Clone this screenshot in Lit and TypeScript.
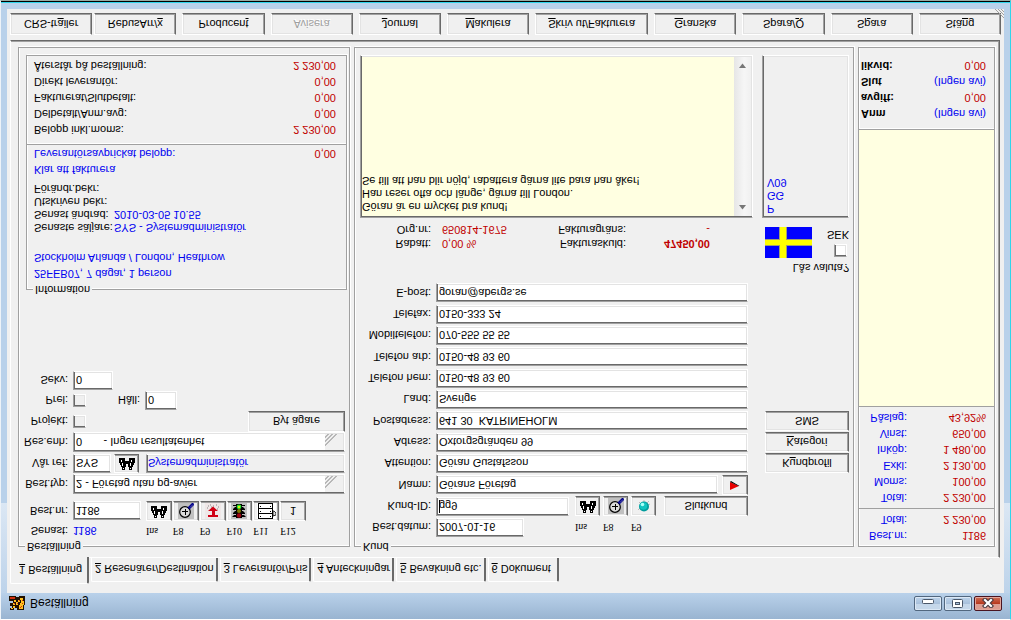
import { LitElement, html, svg, css, TemplateResult } from "lit";
import { customElement, state } from "lit/decorators.js";

type Label = [string, string, string];

const text = ([before, key, after]: Label) => html`${before}<u>${key}</u>${after}`;

const binoculars = svg`<g shape-rendering="crispEdges">
  <path d="M3 1h3v3h-3zM10 1h3v3h-3zM2 4h5v3h-5zM9 4h5v3h-5zM1 6h5v3h-5zM10 6h5v3h-5zM5 6h6v4h-6zM0 8h5v5h-5zM11 8h5v5h-5zM4 10h2v3h-2zM10 10h2v3h-2z"/>
  <path fill="#fff" d="M4 2h1v1h-1zM11 2h1v1h-1zM3 5h1v3h-1zM11 5h1v3h-1zM2 9h1v2h-1zM12 9h1v2h-1zM7 6h2v1h-2z"/></g>`;

const magnifier = svg`<rect width="16" height="16" fill="#c0c0c0"/>
  <circle cx="7" cy="7" r="5.300" fill="#dcdcdc" stroke="#000" stroke-width="1.200"/>
  <path d="M4 7.500h6M7 4.500v6" stroke="#000" fill="none" shape-rendering="crispEdges"/>
  <path d="M10.500 10.500l5 5" stroke="#00008b" stroke-width="2.800"/>
  <path d="M12 11.500l3 3" stroke="#8080c0" stroke-width=".7"/>`;

const arrowDown = svg`<rect width="16" height="16" fill="#efe7e7"/>
  <path d="M3 13h1M5 14h1M8 13h1M11 14h1M13 12h1M12 10h1M2 11h1M6 12h1" stroke="#888"/>
  <path fill="#d00014" d="M3 2h10v2h-3v4h3l-5 4.500L3 8h4V4H3z"/>`;

const trafficLight = svg`<rect width="16" height="16" fill="#c0c0c0"/>
  <path d="M5 1h6v14H5zM1 2h4v2H3zM15 2h-4v2h2zM2 6h3v2H4zM14 6h-3v2h1zM2 10h3v2H4zM14 10h-3v2h1z" fill="#000"/>
  <path d="M2 5.500h12M2 9.500h12M2 13.500h12" stroke="#000"/>
  <circle cx="8" cy="3.500" r="2.200" fill="#a00010"/><circle cx="8" cy="8" r="2" fill="#807800"/>
  <circle cx="8" cy="12.200" r="2.400" fill="#30e030"/><circle cx="8" cy="12" r="1.100" fill="#ff0"/>`;

const film = svg`<rect width="19" height="16" fill="#fff"/>
  <g fill="none" stroke="#000" shape-rendering="crispEdges"><path d="M1.500 0v16M15.500 0v16"/>
  <path d="M2 .5h14M2 5.500h14M2 10.500h14M2 15.500h14"/></g>
  <path d="M3 2h1v1h-1zM13 2h1v1h-1zM3 7h1v1h-1zM13 7h1v1h-1zM3 12h1v1h-1zM13 12h1v1h-1z"/>
  <path d="M16 3l3 1v2l-2 2h-1z" fill="#ddd" stroke="#000" stroke-width=".8"/>`;

const ball = svg`<path d="M2 4l2 2M3 12l2-2M13 13l-2-2M8 14v-3M14 10l-2-1" stroke="#bbb"/>
  <circle cx="8" cy="7.500" r="5" fill="#009c9c"/><circle cx="7.500" cy="8" r="3.800" fill="#12c4c0"/>
  <circle cx="6.500" cy="9.500" r="1.800" fill="#a8fff8"/>`;

const redPointer = svg`<path d="M3 3v8l9-4z" fill="#e80000"/><path d="M3 11l1 1 8.500-5h-1z" fill="#000"/>`;

const icon = (drawing: TemplateResult<2>, width = 16) =>
  html`<svg width=${width} height="16" viewBox="0 0 ${width} 16" aria-hidden="true">${drawing}</svg>`;

@customElement("app-root")
export class AppRoot extends LitElement {
  @state() private activeTab = 0;

  private tabs: Label[] = [
    ["", "1", " Beställning"],
    ["", "2", " Resenärer/Destination"],
    ["", "3", " Leverantör/Pris"],
    ["", "4", " Anteckningar"],
    ["", "5", " Bevakning etc."],
    ["", "6", " Dokument"],
  ];

  private actions: Label[] = [
    ["CRS-tr", "a", "iler"],
    ["RebusArr/", "x", ""],
    ["Producen", "t", ""],
    ["Avisera", "", ""],
    ["", "J", "ournal"],
    ["", "M", "akulera"],
    ["", "S", "kriv ut/Fakturera"],
    ["", "G", "ranska"],
    ["Spara/", "Q", ""],
    ["S", "p", "ara"],
    ["Stä", "n", "g"],
  ];

  static styles = css`
    :host {
      display: block;
      font: 11px/14px "Liberation Sans", Arial, sans-serif;
      color: #000;
    }
    * { box-sizing: border-box; }
    button, input, select, textarea {
      font: inherit;
      color: inherit;
      margin: 0;
      padding: 0;
      border-radius: 0;
      outline: none;
    }
    p, dl, dd, dt { margin: 0; }
    svg { display: block; }

    .window {
      display: flex;
      flex-direction: column;
      min-height: 100vh;
      transform: scaleY(-1);
      border-top: 1px solid #fff;
      border-left: 1px solid #eef3f8;
      border-right: 1px solid #2fd5ea;
      border-bottom: 1px solid #9aaba4;
      background: #b9d1ea;
    }
    .edge { height: 2px; background: linear-gradient(#2fd5ea 50%, #000 50%); }
    .titlebar {
      display: flex;
      align-items: center;
      gap: 5px;
      height: 26px;
      padding: 5px 8px 0;
      background: linear-gradient(#99b4d1, #b9d1ea);
      font-size: 12px;
    }
    .title { flex: 1; }
    .winbtns { display: flex; gap: 2px; }
    .winbtn {
      display: grid;
      place-items: center;
      width: 28px;
      height: 15px;
      border: 1px solid #52677f;
      border-radius: 2px;
      box-shadow: inset 0 0 0 1px #dce8f5;
      background: linear-gradient(#c5d7ea 50%, #a9c1dc 50%, #bcd3eb);
    }
    .winbtn.close {
      border-color: #4a1420;
      box-shadow: inset 0 0 0 1px #e2a79c;
      background: linear-gradient(#dd9c90 50%, #b83a20 50%, #d07058);
    }
    .frame {
      flex: 1;
      display: flex;
      flex-direction: column;
      padding: 0 6px 6px;
      background: linear-gradient(#bdd3ea, #dbe7f4) top / 100% 90px no-repeat #b9d1ea;
    }
    .client {
      flex: 1;
      display: flex;
      flex-direction: column;
      padding: 9px 2px 4px 3px;
      background: #f0f0f0;
      position: relative;
    }
    .grip { position: absolute; right: 0; bottom: 0; }

    .tabs { display: flex; align-items: flex-end; gap: 2px; height: 26px; }
    .tab {
      height: 24px;
      padding: 0 2px 0 3px;
      border: solid;
      border-width: 1px 2px 0 1px;
      border-color: #fff #696969 #fff #fff;
      border-radius: 2px 2px 0 0;
      background: #f0f0f0;
    }
    .tab:last-child { padding-right: 6px; }
    .tab.active { height: 27px; margin-bottom: -1px; padding: 0 5px 0 8px; position: relative; }

    .pane {
      flex: 1;
      display: grid;
      grid-template-columns: 332px 1fr 137px;
      gap: 4px;
      margin-right: 2px;
      padding: 4px 4px 6px 7px;
      border: 1px solid;
      border-color: #fff #696969 #696969 #fff;
      box-shadow: inset -1px -1px 0 #a0a0a0;
    }
    .group {
      display: flex;
      flex-direction: column;
      min-width: 0;
      margin: 0;
      padding: 0;
      border: 1px solid #a0a0a0;
      box-shadow: 1px 1px 0 #fff, inset 1px 1px 0 #fff;
    }
    .group legend {
      height: 13px;
      margin-left: 6px;
      padding: 0 2px;
      line-height: 13px;
      background: #f0f0f0;
    }

    .raised {
      border: 1px solid;
      border-color: #fff #696969 #696969 #fff;
      box-shadow: inset -1px -1px 0 #a0a0a0, inset 1px 1px 0 #e3e3e3;
      background: #f0f0f0;
      overflow: hidden;
      white-space: nowrap;
      text-align: center;
    }
    .raised svg { margin: auto; }
    .sunken {
      border: 1px solid;
      border-color: #a0a0a0 #fff #fff #a0a0a0;
      box-shadow: inset 1px 1px 0 #696969, inset -1px -1px 0 #e3e3e3;
      background: #fff;
    }
    input.sunken, select.sunken, output.sunken {
      display: block;
      width: 100%;
      min-width: 0;
      height: 19px;
      padding: 0 2px;
    }
    input.sunken.check {
      appearance: none;
      width: 13px;
      height: 13px;
    }
    .dim { background: #f0f0f0; }
    .caret { background: linear-gradient(#000, #000) 2px 2px / 1px 13px no-repeat #fff; }
    .blue { color: #0000f0; }
    .red { color: #c00000; }

    .order {
      display: grid;
      grid-template-columns: 49px 1fr;
      grid-template-rows: 16px 28px repeat(5, 21px);
      column-gap: 5px;
      align-items: center;
      padding: 1px 4px 0 0;
    }
    .order label, .order .lbl { text-align: right; }
    .order .tall { padding-bottom: 4px; }
    .line { display: grid; align-items: center; }
    .numbers { grid-template-columns: 68px 160px; column-gap: 5px; }
    .six { display: grid; grid-template-columns: repeat(6, 1fr); column-gap: 1px; }
    .six .raised, .three .raised { height: 20px; }
    .keys { font: 10px/12px "Liberation Serif", "Times New Roman", serif; }
    .combo { position: relative; }
    .combo select.sunken { appearance: none; height: 20px; white-space: pre; }
    .combo svg { position: absolute; right: 2px; top: 2px; pointer-events: none; }
    .ref { grid-template-columns: 38px 25px 1fr; column-gap: 3px; }
    .ref .raised { height: 19px; }
    .ref output.sunken { width: auto; margin-left: 4px; padding: 2px 1px 0; }
    .project { grid-template-columns: 1fr 97px; }
    .project .raised { height: 21px; }
    .prel { grid-template-columns: 13px 49px 32px; column-gap: 5px; }
    .seq { width: 40px; }

    .info { margin: auto 2px 7px 7px; }
    .info .text { padding: 1px 10px 1px 7px; }
    .trip p, .status p, .sums div { height: 16px; line-height: 16px; }
    .sellers {
      display: grid;
      grid-template-columns: 80px 1fr;
      grid-auto-rows: 13px;
      line-height: 13px;
      margin: 16px 0 4px;
      white-space: nowrap;
    }
    .status, .sums div { display: flex; justify-content: space-between; }
    .sums { padding: 6px 10px 2px 7px; border-top: 1px solid #a0a0a0; box-shadow: inset 0 1px 0 #fff; }

    .customer {
      display: grid;
      grid-template-columns: 77px 1fr 84px;
      grid-template-rows: repeat(12, 1fr);
      height: 258px;
      padding: 2px 4px 0 0;
      align-items: center;
    }
    .customer > label { text-align: right; padding-right: 1px; grid-column: 1; }
    .customer > .field { grid-column: 2; margin: 0 17px 0 4px; }
    .customer > .raised { grid-column: 3; height: 20px; }
    .ids { grid-template-columns: 1fr 83px 84px; column-gap: 6px; }
    .ids .date { width: 88px; }
    .three { display: grid; grid-template-columns: repeat(3, 25px); column-gap: 3px; }
    .name { grid-template-columns: 1fr 26px; column-gap: 4px; }
    .ids > .raised, .name > .raised { height: 20px; }

    .credit { display: flex; justify-content: space-between; height: 64px; padding-right: 4px; }
    .terms {
      display: grid;
      grid-template-columns: 76px 104px 69px 84px;
      grid-auto-rows: 14px;
      column-gap: 11px;
      padding-top: 31px;
    }
    .terms dt { text-align: right; white-space: nowrap; }
    .terms .amount { text-align: right; padding-right: 11px; }
    .currency { display: grid; grid-template-columns: 47px 1fr; grid-template-rows: 17px 31px; width: 84px; padding-top: 7px; }
    .currency .lock { grid-column: 1 / 3; justify-self: end; white-space: nowrap; }
    .sek { display: flex; flex-direction: column; align-items: flex-end; padding-top: 1px; gap: 2px; }
    .sek .check { margin-right: 2px; }

    .notes { flex: 1; display: grid; grid-template-columns: 1fr 87px; gap: 9px; padding: 0 4px 7px 5px; }
    .memo { display: flex; background: #ffffe1; padding: 1px; }
    .memo textarea {
      flex: 1;
      min-width: 0;
      border: 0;
      resize: none;
      padding: 3px 0;
      background: transparent;
      line-height: 13px;
      overflow: hidden;
    }
    .scroll {
      display: flex;
      flex-direction: column;
      justify-content: space-between;
      align-items: center;
      width: 17px;
      padding: 6px 0;
      background: linear-gradient(90deg, #e6e6e6, #f6f6f6 60%, #f0f0f0);
    }
    .codes { padding: 2px 4px; line-height: 13px; background: #f0f0f0; }

    .totals {
      display: flex;
      flex-direction: column;
      margin-top: 6px;
      border: 1px solid #a0a0a0;
      box-shadow: 1px 1px 0 #fff, inset 1px 1px 0 #fff;
    }
    .totals dl {
      display: grid;
      grid-template-columns: 48px 1fr;
      grid-auto-rows: 16px;
      line-height: 16px;
      padding: 2px 8px 3px 0;
      border-bottom: 1px solid #a0a0a0;
    }
    .totals dt, .totals dd { text-align: right; }
    .totals .paper { flex: 1; background: #ffffe1; border-bottom: 1px solid #a0a0a0; }
    .totals dl.due { border: 0; padding: 7px 8px 10px 2px; box-shadow: inset 0 1px 0 #fff; }
    .due dt { font-weight: bold; text-align: left; }
    .totals .due dt { text-align: left; }

    .actions { display: flex; gap: 6px; padding: 5px 1px 0 0; }
    .actions .raised { flex: 83 1 0; height: 22px; min-width: 0; }
    .actions .wide { flex-grow: 115; }
    .actions .near { margin-right: -4px; }
    .actions .raised:disabled { color: #a0a0a0; text-shadow: 1px 1px 0 #fff; }
  `;

  private field(id: string, label: string, value: string) {
    return html`<label for=${id}>${label}</label>
      <div class="field"><input class="sunken" id=${id} .value=${value} /></div>`;
  }

  private combo(id: string, label: string, value: string) {
    return html`<label for=${id}>${label}</label>
      <div class="combo">
        <select class="sunken" id=${id}><option>${value}</option></select>
        <svg width="18" height="16" viewBox="0 0 18 16" aria-hidden="true">
          <rect width="18" height="16" fill="#f0f0f0" />
          <path d="M0 4l12 12M0 5l11 11M0 8l8 8M0 9l7 7M0 12l4 4M0 13l3 3" stroke="#a8a8a8" fill="none" stroke-width=".8" />
        </svg>
      </div>`;
  }

  private rows(cls: string, rows: [string, string][], dt = "blue") {
    return html`<dl class=${cls}>
      ${rows.map(([k, v]) => html`<dt class=${dt}>${k}</dt><dd class=${v.startsWith("(") ? "blue" : "red"}>${v}</dd>`)}
    </dl>`;
  }

  private orderGroup() {
    return html`<fieldset class="group">
      <legend>Beställning</legend>
      <div class="order">
        <span class="lbl">Senast:</span>
        <div class="line numbers">
          <span class="blue">1186</span>
          <div class="six keys">
            ${["Ins", "F8", "F9", "F10", "F11", "F12"].map((k) => html`<span>${k}</span>`)}
          </div>
        </div>
        <label class="tall" for="nr">Best.nr:</label>
        <div class="line numbers tall">
          <input class="sunken" id="nr" .value=${"1186"} />
          <div class="six">
            <button class="raised" aria-label="Sök">${icon(binoculars)}</button>
            <button class="raised" aria-label="Visa">${icon(magnifier)}</button>
            <button class="raised" aria-label="Hämta">${icon(arrowDown)}</button>
            <button class="raised" aria-label="Status">${icon(trafficLight)}</button>
            <button class="raised" aria-label="Lista">${icon(film, 19)}</button>
            <button class="raised">1</button>
          </div>
        </div>
        ${this.combo("typ", "Best.typ:", "2  - Företag utan pg-avier")}
        <label for="ref">Vår ref:</label>
        <div class="line ref">
          <input class="sunken" id="ref" .value=${"SYS"} />
          <button class="raised" aria-label="Sök referens">${icon(binoculars)}</button>
          <output class="sunken dim blue">Systemadministratör</output>
        </div>
        ${this.combo("enh", "Res.enh:", "0\u00a0\u00a0\u00a0\u00a0\u00a0\u00a0\u00a0- Ingen resultatenhet")}
        <label for="proj">Projekt:</label>
        <div class="line project">
          <input class="sunken check dim" id="proj" type="checkbox" />
          <button class="raised">Byt ägare</button>
        </div>
        <label for="prel">Prel:</label>
        <div class="line prel">
          <input class="sunken check dim" id="prel" type="checkbox" />
          <label for="hall">Håll:</label>
          <input class="sunken" id="hall" .value=${"0"} />
        </div>
        <label for="sekv">Sekv:</label>
        <div class="seq"><input class="sunken" id="sekv" .value=${"0"} /></div>
      </div>
      <fieldset class="group info">
        <legend>Information</legend>
        <div class="text">
          <div class="trip blue">
            <p>25FEB07, 7 dagar, 1 person</p>
            <p>Stockholm Arlanda / London, Heathrow</p>
          </div>
          <dl class="sellers">
            <dt>Senaste säljare:</dt><dd class="blue">SYS - Systemadministratör</dd>
            <dt>Senast ändrad:</dt><dd class="blue">2010-03-05 10.55</dd>
            <dt>Utskriven bekr:</dt><dd></dd>
            <dt>Förändr.bekr:</dt><dd></dd>
          </dl>
          <div class="status"><p class="blue">Klar att fakturera</p></div>
          <div class="status">
            <p class="blue">Leverantörsavprickat belopp:</p><p class="red">0,00</p>
          </div>
        </div>
        <div class="sums">
          ${[
            ["Belopp inkl.moms:", "2 230,00"],
            ["Delbetalt/Anm.avg:", "0,00"],
            ["Fakturerat/Slutbetalt:", "0,00"],
            ["Direkt leverantör:", "0,00"],
            ["Återstår på beställning:", "2 230,00"],
          ].map(([k, v]) => html`<div><span>${k}</span><span class="red">${v}</span></div>`)}
        </div>
      </fieldset>
    </fieldset>`;
  }

  private customerGroup() {
    const memo =
      "Göran är en mycket bra kund!\nHan reser ofta och länge, gärna till London.\nSe till att han blir nöjd, rabattera gärna lite bara han åker!";
    return html`<fieldset class="group">
      <legend>Kund</legend>
      <div class="customer">
        <label for="datum">Best.datum:</label>
        <div class="field line ids">
          <div class="date"><input class="sunken" id="datum" .value=${"2007-01-16"} /></div>
          <div class="three keys"><span>Ins</span><span>F8</span><span>F9</span></div>
        </div>
        <label for="kid">Kund-ID:</label>
        <div class="field line ids">
          <input class="sunken caret" id="kid" .value=${"gg9"} />
          <div class="three">
            <button class="raised" aria-label="Sök kund">${icon(binoculars)}</button>
            <button class="raised" aria-label="Visa kund">${icon(magnifier)}</button>
            <button class="raised" aria-label="Webb">${icon(ball)}</button>
          </div>
          <button class="raised">Slutkund</button>
        </div>
        <label for="namn">Namn:</label>
        <div class="field line name">
          <input class="sunken" id="namn" .value=${"Görans Företag"} />
          <button class="raised" aria-label="Nästa">${icon(redPointer)}</button>
        </div>
        ${this.field("att", "Attention:", "Göran Gustafsson")}
        <button class="raised">${text(["K", "u", "ndprofil"])}</button>
        ${this.field("adr", "Adress:", "Oxtorgsgränden 99")}
        <button class="raised">${text(["", "K", "ategori"])}</button>
        ${this.field("post", "Postadress:", "641 30  KATRINEHOLM")}
        <button class="raised">SMS</button>
        ${this.field("land", "Land:", "Sverige")}
        ${this.field("hem", "Telefon hem:", "0150-48 93 60")}
        ${this.field("arb", "Telefon arb:", "0150-48 93 60")}
        ${this.field("mob", "Mobiltelefon:", "070-555 55 55")}
        ${this.field("fax", "Telefax:", "0150-333 24")}
        ${this.field("epost", "E-post:", "goran@abergs.se")}
      </div>
      <div class="credit">
        <dl class="terms">
          <dt>Rabatt:</dt><dd class="red">0,00 %</dd>
          <dt>Fakturaskuld:</dt><dd class="red amount"><b>47450,00</b></dd>
          <dt>Org.nr:</dt><dd class="red">650814-1675</dd>
          <dt>Fakturagräns:</dt><dd class="red amount">-</dd>
        </dl>
        <div class="currency">
          <label class="lock" for="lock">Lås valuta?</label>
          <svg width="47" height="31" viewBox="0 0 47 31" shape-rendering="crispEdges" role="img" aria-label="Sverige">
            <rect width="47" height="31" fill="#00f" />
            <path d="M14 0h8v31h-8zM0 12h47v7H0z" fill="#a0a070" />
            <path d="M15 0h6v31h-6zM0 13h47v5H0z" fill="#ff0" />
          </svg>
          <div class="sek">
            <input class="sunken check" id="lock" type="checkbox" />
            <span>SEK</span>
          </div>
        </div>
      </div>
      <div class="notes">
        <div class="memo sunken">
          <textarea aria-label="Anteckning" .value=${memo}></textarea>
          <div class="scroll">
            <svg width="9" height="5" viewBox="0 0 9 5"><path d="M1 5l3.500-4.500L8 5z" fill="#777" /></svg>
            <svg width="9" height="5" viewBox="0 0 9 5"><path d="M1 0l3.500 4.500L8 0z" fill="#777" /></svg>
          </div>
        </div>
        <div class="codes sunken dim blue"><p>P</p><p>GG</p><p>V09</p></div>
      </div>
    </fieldset>`;
  }

  private totals() {
    return html`<section class="totals">
      ${this.rows("head", [["Best.nr:", "1186"], ["Total:", "2 230,00"]])}
      ${this.rows("", [
        ["Total:", "2 230,00"],
        ["Moms:", "100,00"],
        ["Exkl:", "2 130,00"],
        ["Inköp:", "1 480,00"],
        ["Vinst:", "650,00"],
        ["Påslag:", "43,92%"],
      ])}
      <div class="paper"></div>
      ${this.rows("due", [
        ["Anm", "(Ingen avi)"],
        ["avgift:", "0,00"],
        ["Slut", "(Ingen avi)"],
        ["likvid:", "0,00"],
      ], "")}
    </section>`;
  }

  render() {
    return html`<main class="window">
      <header class="titlebar">
        <svg width="16" height="16" viewBox="0 0 16 16" aria-hidden="true" shape-rendering="crispEdges">
          <path d="M1 1h4v2h3v-2h7v5h1v9h-6v-1H7v1H0v-5h4V8H1V5h2V3H1z" fill="#201000" />
          <path d="M2 2h2v1h2v2H4V3H2zM10 2h4v4h1v4h-1v3h-3v-2h1V8h-1V6h-2v3H7v2H5V9h2V6h3zM9 9h2v2H9zM4 6h2v2H4z" fill="#ffc020" />
          <path d="M1 12h5v2H1zM12 4h1v1h-1zM13 7h1v1h-1zM8 7h1v1H8zM13 10h1v1h-1zM11 3h1v1h-1zM10 10h1v1h-1zM5 7h1v1H5z" fill="#d03010" />
        </svg>
        <span class="title">Beställning</span>
        <div class="winbtns">
          <button class="winbtn" aria-label="Minimera">
            <svg width="12" height="8" viewBox="0 0 12 8"><rect x=".5" y="3.500" width="11" height="4" rx="1" fill="#fff" stroke="#4a5668" /></svg>
          </button>
          <button class="winbtn" aria-label="Maximera">
            <svg width="12" height="10" viewBox="0 0 12 10"><rect x=".5" y=".5" width="10" height="8" rx="1" fill="#fff" stroke="#4a5668" /><rect x="3.500" y="3.500" width="4" height="2" fill="#a9c1dc" stroke="#4a5668" /></svg>
          </button>
          <button class="winbtn close" aria-label="Stäng fönster">
            <svg width="12" height="10" viewBox="0 0 12 10"><path d="M3 2l6 6M9 2l-6 6" stroke="#4a3a40" stroke-width="4.400" stroke-linecap="square" /><path d="M3 2l6 6M9 2l-6 6" stroke="#fff" stroke-width="2.200" stroke-linecap="square" /></svg>
          </button>
        </div>
      </header>
      <div class="frame">
        <div class="client">
          <nav class="tabs" role="tablist">
            ${this.tabs.map(
              (t, i) => html`<button
                role="tab"
                class="tab ${i === this.activeTab ? "active" : ""}"
                aria-selected=${i === this.activeTab ? "true" : "false"}
                @click=${() => (this.activeTab = i)}
              >${text(t)}</button>`
            )}
          </nav>
          <div class="pane">${this.orderGroup()} ${this.customerGroup()} ${this.totals()}</div>
          <div class="actions">
            ${this.actions.map(
              (a, i) => html`<button class="raised ${i === 6 ? "wide" : ""} ${i === 0 ? "near" : ""}" ?disabled=${i === 3}>${text(a)}</button>`
            )}
          </div>
          <svg class="grip" width="9" height="9" viewBox="0 0 9 9" aria-hidden="true">
            <path d="M0 9l9-9M3 9l6-6M6 9l3-3" stroke="#a0a0a0" fill="none" />
          </svg>
        </div>
      </div>
      <div class="edge"></div>
    </main>`;
  }
}
